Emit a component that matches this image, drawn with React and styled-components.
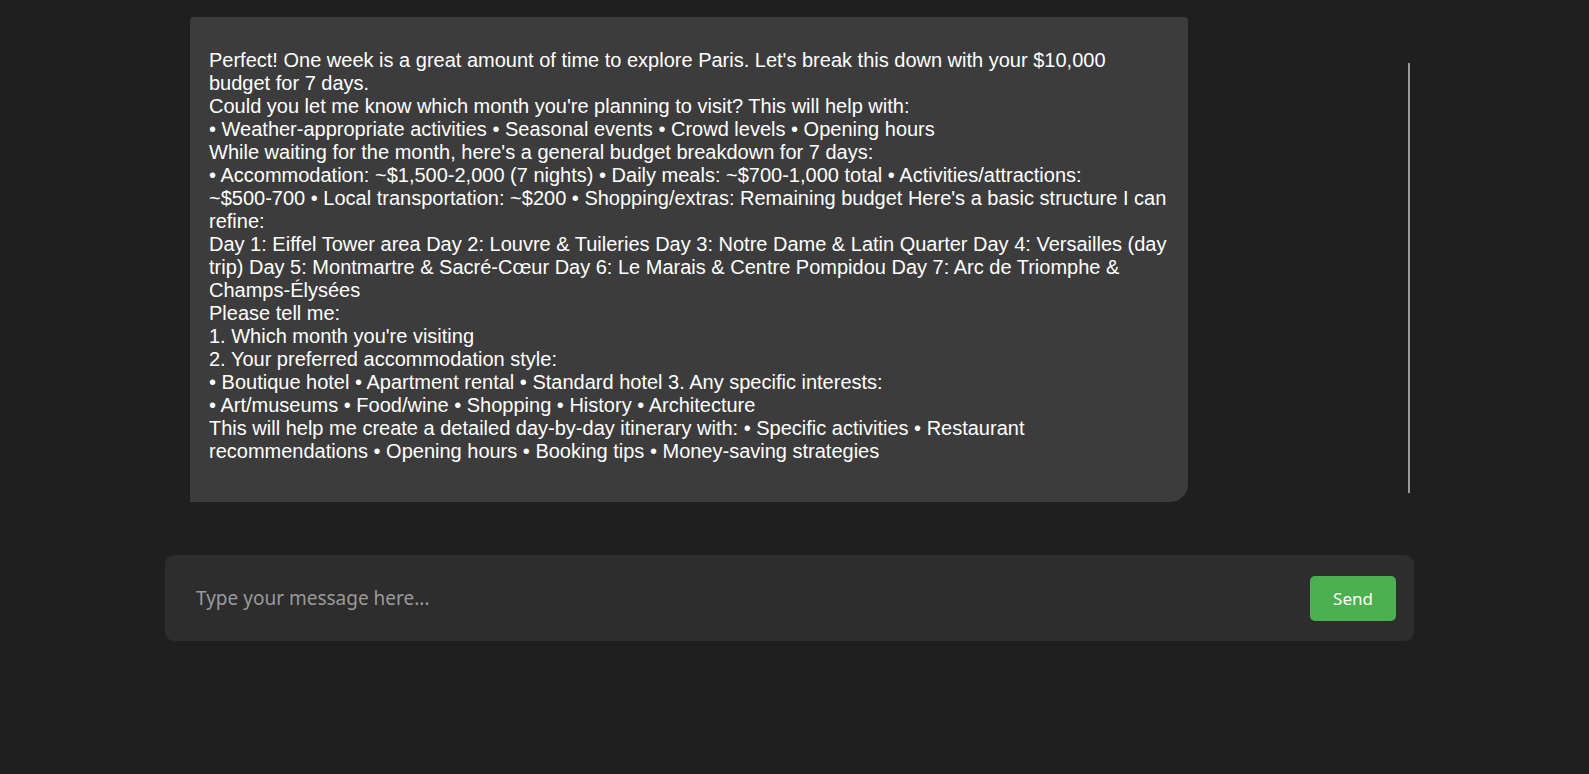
import React from "react";
import styled, { createGlobalStyle } from "styled-components";

const GlobalStyle = createGlobalStyle`
  html, body {
    margin: 0;
    padding: 0;
    background: #1f1f1f;
  }
`;

// word joiners keep hyphenated values on one line, like the original
const J = "\u2060";

const LINES = [
  "Perfect! One week is a great amount of time to explore Paris. Let's break this down with your $10,000 budget for 7 days.",
  "Could you let me know which month you're planning to visit? This will help with:",
  "• Weather-appropriate activities • Seasonal events • Crowd levels • Opening hours",
  "While waiting for the month, here's a general budget breakdown for 7 days:",
  `• Accommodation: ~$1,500${J}-${J}2,000 (7 nights) • Daily meals: ~$700${J}-${J}1,000 total • Activities/attractions: ~$500${J}-${J}700 • Local transportation: ~$200 • Shopping/extras: Remaining budget Here's a basic structure I can refine:`,
  `Day 1: Eiffel Tower area Day 2: Louvre & Tuileries Day 3: Notre Dame & Latin Quarter Day 4: Versailles (day trip) Day 5: Montmartre & Sacré${J}-${J}Cœur Day 6: Le Marais & Centre Pompidou Day 7: Arc de Triomphe & Champs${J}-${J}Élysées`,
  "Please tell me:",
  "1. Which month you're visiting",
  "2. Your preferred accommodation style:",
  "• Boutique hotel • Apartment rental • Standard hotel 3. Any specific interests:",
  "• Art/museums • Food/wine • Shopping • History • Architecture",
  "This will help me create a detailed day-by-day itinerary with: • Specific activities • Restaurant recommendations • Opening hours • Booking tips • Money-saving strategies",
];

const App = () => {
  return (
    <>
      <GlobalStyle />
      <Page>
        <ChatArea>
          <Bubble>
            {LINES.map((line, i) => (
              <Line key={i}>{line}</Line>
            ))}
          </Bubble>
          <ScrollThumb />
        </ChatArea>
        <InputBar>
          <MessageInput placeholder="Type your message here..." />
          <SendButton>Send</SendButton>
        </InputBar>
      </Page>
    </>
  );
};

export default App;

const Page = styled.div`
  width: 1249px;
  margin-left: 165px;
  padding-top: 17px;
`;

const ChatArea = styled.div`
  display: flex;
  align-items: flex-start;
  height: 485px;
  padding-left: 25px;
  padding-right: 4px;
  box-sizing: border-box;
`;

const Bubble = styled.div`
  width: 998px;
  flex-shrink: 0;
  box-sizing: border-box;
  height: 485px;
  padding: 32px 18.5px 40px 19px;
  background: #3c3c3c;
  border-radius: 4px 4px 18px 0;
  color: #ffffff;
  font-family: "Liberation Sans", Arial, sans-serif;
  font-size: 20px;
  line-height: 23px;
`;

const Line = styled.div``;

const ScrollThumb = styled.div`
  width: 2px;
  height: 430px;
  margin-top: 46px;
  margin-left: auto;
  background: #9a9a9a;
`;

const InputBar = styled.div`
  display: flex;
  align-items: center;
  justify-content: space-between;
  height: 86px;
  margin-top: 53px;
  padding: 0 18px 0 31px;
  box-sizing: border-box;
  background: #2d2d2d;
  border-radius: 9px;
`;

const MessageInput = styled.input`
  flex: 1;
  background: transparent;
  border: none;
  outline: none;
  color: #ffffff;
  font-family: "Noto Sans", "Open Sans", sans-serif;
  font-size: 19px;
  padding: 0;

  &::placeholder {
    color: #9a9a9a;
  }
`;

const SendButton = styled.button`
  width: 86px;
  height: 45px;
  border: none;
  border-radius: 5px;
  background: #4caf50;
  color: #ffffff;
  font-family: "Noto Sans", "Open Sans", sans-serif;
  font-size: 17px;
  cursor: pointer;
`;
